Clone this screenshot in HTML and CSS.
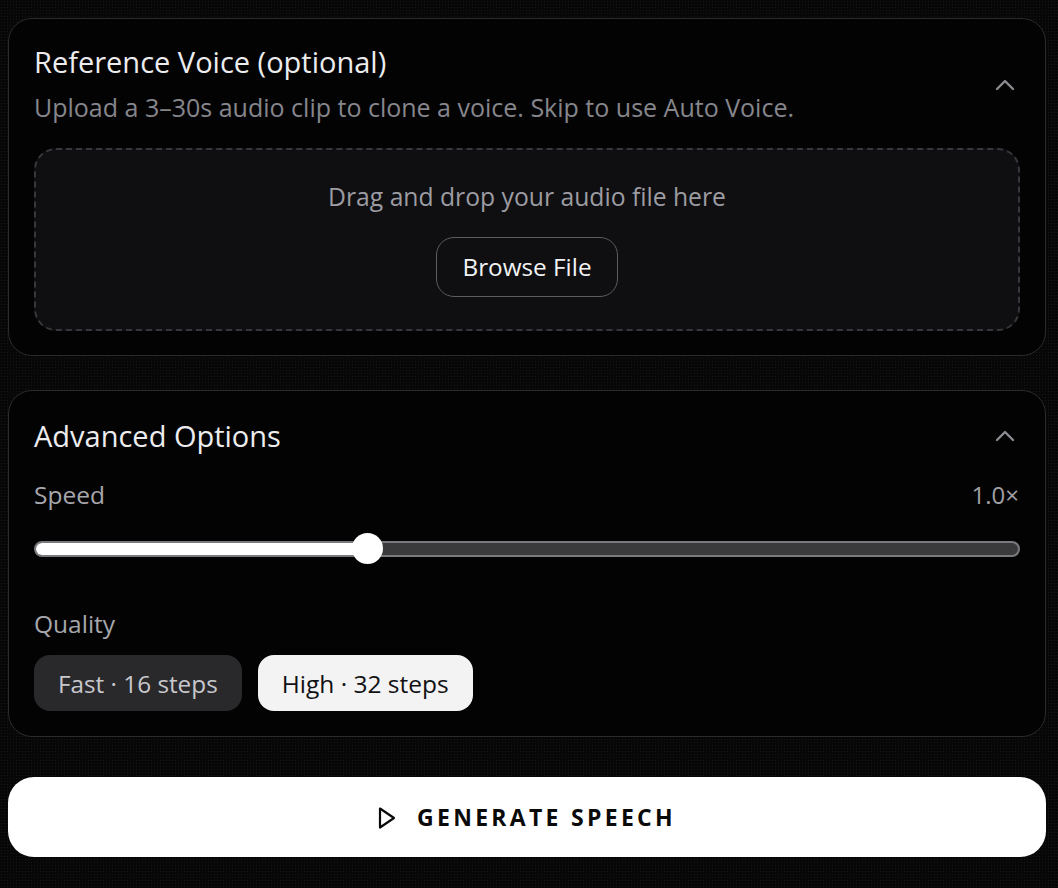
FILE: index.html
```html
<!DOCTYPE html>
<html lang="en">
<head>
<meta charset="utf-8">
<title>Voice Settings</title>
<link rel="stylesheet" href="styles.css">
</head>
<body>
<main class="page">
  <section class="card">
    <header class="card-head">
      <div class="head-text">
        <h2 class="card-title">Reference Voice (optional)</h2>
        <p class="card-sub">Upload a 3–30s audio clip to clone a voice. Skip to use Auto Voice.</p>
      </div>
      <svg class="chev" width="20" height="12" viewBox="0 0 20 12"><path d="M2 10 L10 2 L18 10" fill="none" stroke="currentColor" stroke-width="2.4" stroke-linecap="round" stroke-linejoin="round"/></svg>
    </header>
    <div class="drop">
      <p class="drop-text">Drag and drop your audio file here</p>
      <button class="browse" type="button">Browse File</button>
    </div>
  </section>

  <section class="card card-adv">
    <header class="card-head adv-head">
      <h2 class="card-title">Advanced Options</h2>
      <svg class="chev" width="20" height="12" viewBox="0 0 20 12"><path d="M2 10 L10 2 L18 10" fill="none" stroke="currentColor" stroke-width="2.4" stroke-linecap="round" stroke-linejoin="round"/></svg>
    </header>
    <div class="row-label">
      <span class="label">Speed</span>
      <span class="value">1.0×</span>
    </div>
    <div class="slider">
      <div class="track">
        <div class="fill" style="width: 33.9%"></div>
      </div>
      <div class="thumb" style="left: 33.9%"></div>
    </div>
    <div class="label quality-label">Quality</div>
    <div class="seg">
      <button class="opt" type="button">Fast · 16 steps</button>
      <button class="opt opt-on" type="button">High · 32 steps</button>
    </div>
  </section>

  <button class="generate" type="button">
    <svg class="play" width="18" height="24" viewBox="0 0 18 24"><path d="M2 2.5 L16 12 L2 21.5 Z" fill="none" stroke="currentColor" stroke-width="2.2" stroke-linejoin="round"/></svg>
    <span>GENERATE SPEECH</span>
  </button>
</main>
</body>
</html>
```

FILE: styles.css
```css
* { box-sizing: border-box; }

html, body {
  margin: 0;
  padding: 0;
}

body {
  background-color: #070707;
  background-image: radial-gradient(circle, #161617 0.7px, transparent 1px);
  background-size: 3px 3px;
  font-family: "Open Sans", "Noto Sans", sans-serif;
  color: #ececee;
  min-height: 888px;
}

.page {
  padding: 18px 12px 0 8px;
  display: flex;
  flex-direction: column;
}

.card {
  background: #030304;
  border: 1.5px solid #2b2b2e;
  border-radius: 24px;
  padding: 24px 25px 24px 25px;
}

.card-adv {
  margin-top: 34px;
  padding-top: 26px;
  padding-bottom: 25px;
}

.card-head {
  display: flex;
  align-items: center;
  justify-content: space-between;
}

.card-title {
  margin: 0;
  font-size: 29px;
  font-weight: 400;
  line-height: 38px;
  color: #ececee;
}

.card-sub {
  margin: 10px 0 0;
  font-size: 25px;
  line-height: 32px;
  color: #86868c;
}

.chev {
  color: #8b8b91;
  margin-right: 5px;
  margin-top: 4px;
}

.adv-head .chev { margin-top: 0; }

.drop {
  margin-top: 25px;
  height: 183px;
  background: #0f0f11;
  border: 2px dashed #38383c;
  border-radius: 22px;
  display: flex;
  flex-direction: column;
  align-items: center;
  justify-content: center;
  padding-bottom: 2px;
}

.drop-text {
  margin: 0;
  font-size: 24.7px;
  line-height: 32px;
  color: #9c9ca2;
}

.browse {
  margin-top: 24px;
  font-family: inherit;
  font-size: 24.3px;
  color: #f2f2f4;
  background: #0f0f11;
  border: 1.5px solid #5c5c61;
  border-radius: 18px;
  height: 60px;
  padding: 0 25px;
}

.row-label {
  margin-top: 24px;
  display: flex;
  justify-content: space-between;
  align-items: center;
}

.label {
  font-size: 24.5px;
  line-height: 32px;
  color: #a7a7ac;
}

.value {
  font-size: 24px;
  line-height: 32px;
  color: #a0a0a5;
  margin-right: 1px;
}

.slider {
  position: relative;
  margin-top: 22px;
  height: 31px;
  display: flex;
  align-items: center;
}

.track {
  flex: 1;
  height: 16px;
  border: 2px solid #7a7a7e;
  border-radius: 8px;
  background: #3a3a3c;
  overflow: hidden;
}

.fill {
  height: 100%;
  background: #ffffff;
}

.thumb {
  position: absolute;
  top: 0;
  width: 31px;
  height: 31px;
  margin-left: -16px;
  border-radius: 50%;
  background: #ffffff;
}

.quality-label {
  margin-top: 44px;
}

.seg {
  margin-top: 15px;
  display: flex;
  gap: 16px;
}

.opt {
  font-family: inherit;
  font-size: 24.3px;
  height: 56px;
  padding: 0 24px;
  border: none;
  border-radius: 16px;
  background: #29292c;
  color: #c8c8cc;
}

.opt-on {
  background: #f3f3f3;
  color: #111113;
  padding: 0 24px;
  font-size: 24.5px;
}

.generate {
  margin-top: 40px;
  height: 80px;
  border: none;
  border-radius: 26px;
  background: #ffffff;
  color: #0a0a0a;
  font-family: inherit;
  font-size: 23px;
  font-weight: 700;
  letter-spacing: 3.3px;
  display: flex;
  align-items: center;
  justify-content: center;
  gap: 21px;
  padding: 0;
}

.play {
  margin-top: 1px;
}
```
